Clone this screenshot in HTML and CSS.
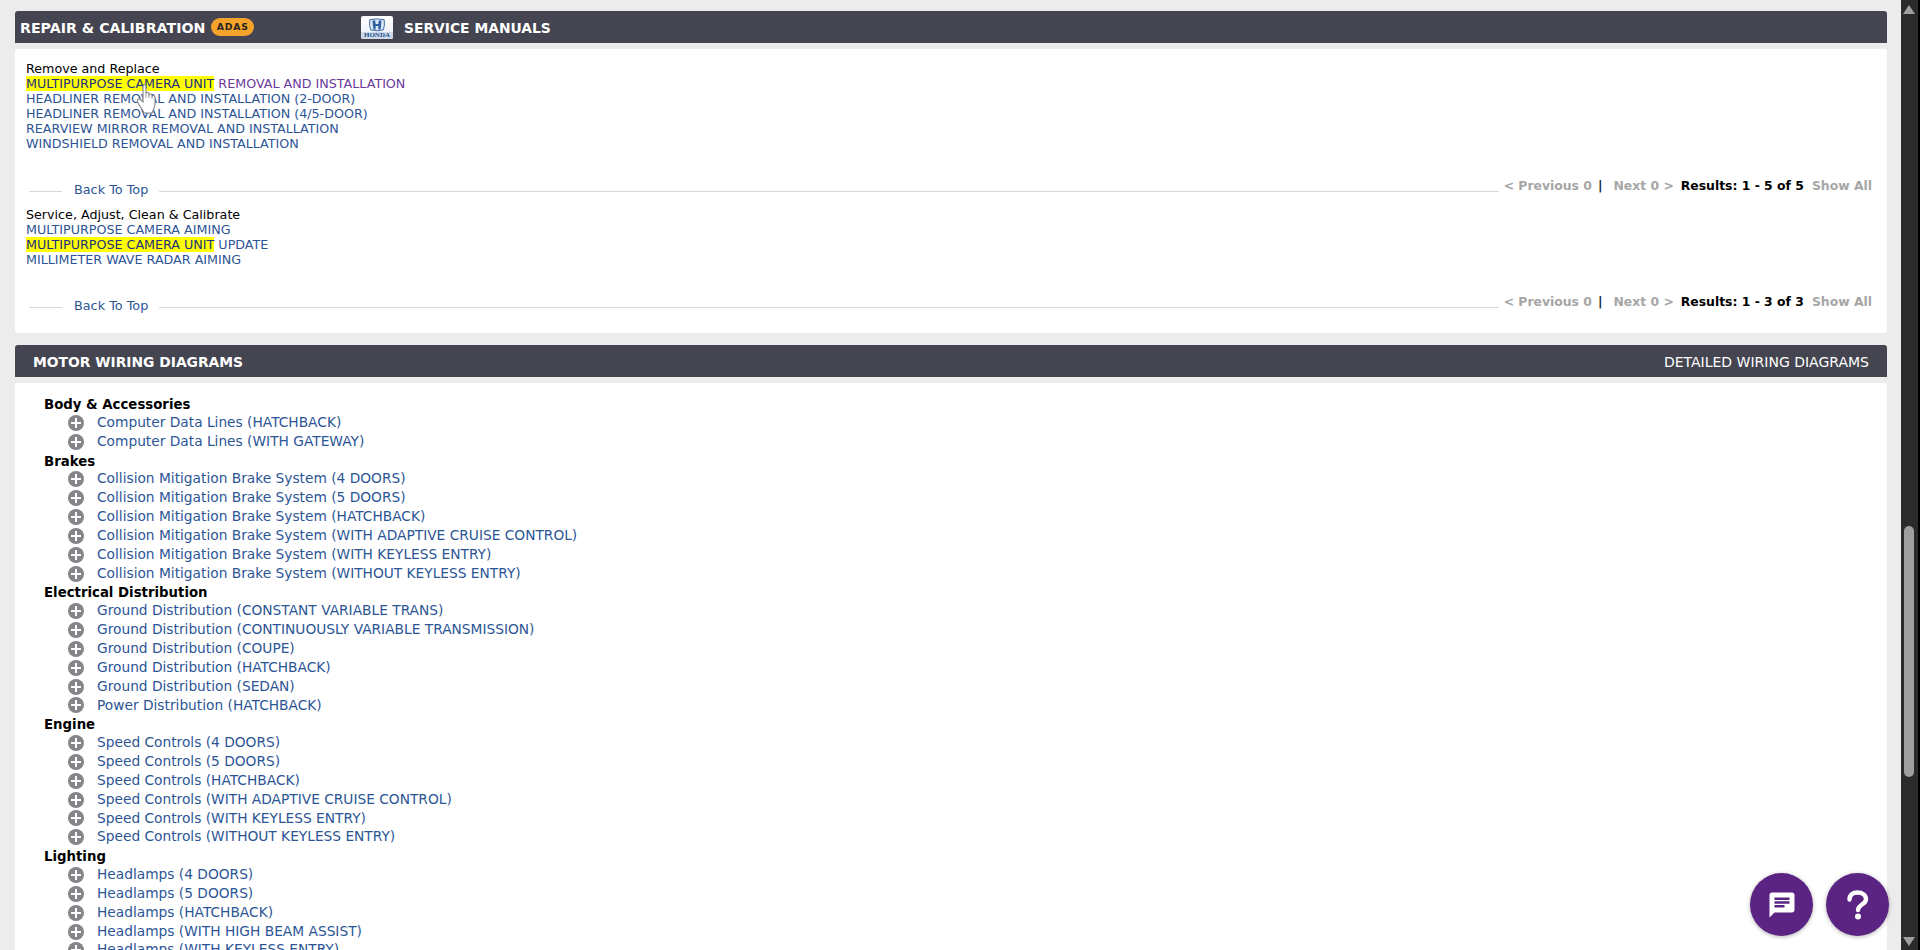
FILE: index.html
```html
<!DOCTYPE html>
<html lang="en">
<head>
<meta charset="utf-8">
<title>Repair &amp; Calibration</title>
<link rel="stylesheet" href="styles.css">
</head>
<body>
<main class="page">
  <header class="bar bar-first">
    <div class="bar-left"><span class="bar-title bar-title-main">REPAIR &amp; CALIBRATION</span><span class="badge">ADAS</span></div>
    <div class="honda">
      <svg class="honda-h" viewBox="0 0 20 15" aria-hidden="true"><path d="M2 1.500Q10 0 18 1.500Q19 8 17 13Q10 15 3 13Q1 8 2 1.500Z" fill="#dbe6f3" stroke="#2f5f9e" stroke-width="1"/><path d="M5 2.500H8L8.500 6.500H11.500L12 2.500H15L14 12.500H11.500L11.500 8.500H8.500L8.500 12.500H6Z" fill="#2f5f9e"/></svg>
      <span class="honda-word">HONDA</span>
    </div>
    <span class="bar-title">SERVICE MANUALS</span>
  </header>
  <section class="card card-repair">
    <div class="group">
      <div class="group-name">Remove and Replace</div>
      <a class="doc visited"><mark>MULTIPURPOSE CAMERA UNIT</mark> REMOVAL AND INSTALLATION</a>
      <a class="doc">HEADLINER REMOVAL AND INSTALLATION (2-DOOR)</a>
      <a class="doc">HEADLINER REMOVAL AND INSTALLATION (4/5-DOOR)</a>
      <a class="doc">REARVIEW MIRROR REMOVAL AND INSTALLATION</a>
      <a class="doc">WINDSHIELD REMOVAL AND INSTALLATION</a>
    </div>
    <div class="pager pager-first">
      <span class="rule rule-short"></span><a class="top">Back To Top</a><span class="rule rule-long"></span>
      <div class="pager-nav"><span class="off">&lt; Previous 0</span><span class="sep">|</span><span class="off">Next 0 &gt;</span><span class="count">Results: 1 - 5 of 5</span><span class="off">Show All</span></div>
    </div>
    <div class="group group-second">
      <div class="group-name">Service, Adjust, Clean &amp; Calibrate</div>
      <a class="doc">MULTIPURPOSE CAMERA AIMING</a>
      <a class="doc"><mark>MULTIPURPOSE CAMERA UNIT</mark> UPDATE</a>
      <a class="doc">MILLIMETER WAVE RADAR AIMING</a>
    </div>
    <div class="pager pager-second">
      <span class="rule rule-short"></span><a class="top">Back To Top</a><span class="rule rule-long"></span>
      <div class="pager-nav"><span class="off">&lt; Previous 0</span><span class="sep">|</span><span class="off">Next 0 &gt;</span><span class="count">Results: 1 - 3 of 3</span><span class="off">Show All</span></div>
    </div>
    <svg class="hand" viewBox="0 0 24 32" aria-hidden="true"><path d="M8 14V3.500C8 1 11 1 11 3.500V11C11 9 14 9 14 11V12.500C14 10.500 17 10.500 17 12.500V14C17 12 20 12 20 14.500V21C20 25 18 27 17 30H9C8 27 5 24 2.500 19C1.500 16.500 4 15 5.500 16.500L8 19Z" fill="#fff" stroke="#85858c" stroke-width="1.100"/><path d="M11 11V15M14 12V15M17 14V16" fill="none" stroke="#85858c" stroke-width=".8"/></svg>
  </section>

  <header class="bar bar-second">
    <span class="bar-title">MOTOR WIRING DIAGRAMS</span>
    <span class="bar-link">DETAILED WIRING DIAGRAMS</span>
  </header>
  <section class="card card-wiring">
    <div class="sys">Body &amp; Accessories</div>
    <a class="row"><i class="plus"></i>Computer Data Lines (HATCHBACK)</a>
    <a class="row"><i class="plus"></i>Computer Data Lines (WITH GATEWAY)</a>
    <div class="sys">Brakes</div>
    <a class="row"><i class="plus"></i>Collision Mitigation Brake System (4 DOORS)</a>
    <a class="row"><i class="plus"></i>Collision Mitigation Brake System (5 DOORS)</a>
    <a class="row"><i class="plus"></i>Collision Mitigation Brake System (HATCHBACK)</a>
    <a class="row"><i class="plus"></i>Collision Mitigation Brake System (WITH ADAPTIVE CRUISE CONTROL)</a>
    <a class="row"><i class="plus"></i>Collision Mitigation Brake System (WITH KEYLESS ENTRY)</a>
    <a class="row"><i class="plus"></i>Collision Mitigation Brake System (WITHOUT KEYLESS ENTRY)</a>
    <div class="sys">Electrical Distribution</div>
    <a class="row"><i class="plus"></i>Ground Distribution (CONSTANT VARIABLE TRANS)</a>
    <a class="row"><i class="plus"></i>Ground Distribution (CONTINUOUSLY VARIABLE TRANSMISSION)</a>
    <a class="row"><i class="plus"></i>Ground Distribution (COUPE)</a>
    <a class="row"><i class="plus"></i>Ground Distribution (HATCHBACK)</a>
    <a class="row"><i class="plus"></i>Ground Distribution (SEDAN)</a>
    <a class="row"><i class="plus"></i>Power Distribution (HATCHBACK)</a>
    <div class="sys">Engine</div>
    <a class="row"><i class="plus"></i>Speed Controls (4 DOORS)</a>
    <a class="row"><i class="plus"></i>Speed Controls (5 DOORS)</a>
    <a class="row"><i class="plus"></i>Speed Controls (HATCHBACK)</a>
    <a class="row"><i class="plus"></i>Speed Controls (WITH ADAPTIVE CRUISE CONTROL)</a>
    <a class="row"><i class="plus"></i>Speed Controls (WITH KEYLESS ENTRY)</a>
    <a class="row"><i class="plus"></i>Speed Controls (WITHOUT KEYLESS ENTRY)</a>
    <div class="sys">Lighting</div>
    <a class="row"><i class="plus"></i>Headlamps (4 DOORS)</a>
    <a class="row"><i class="plus"></i>Headlamps (5 DOORS)</a>
    <a class="row"><i class="plus"></i>Headlamps (HATCHBACK)</a>
    <a class="row"><i class="plus"></i>Headlamps (WITH HIGH BEAM ASSIST)</a>
    <a class="row"><i class="plus"></i>Headlamps (WITH KEYLESS ENTRY)</a>
  </section>
</main>
<aside class="scrollbar" aria-hidden="true">
  <span class="arrow arrow-up"></span>
  <span class="thumb"></span>
  <span class="arrow arrow-down"></span>
</aside>
<div class="fabs">
  <button class="fab" aria-label="Chat"><svg viewBox="0 0 24 24" width="30" height="30"><path fill="#fff" d="M20 2H4C2.900 2 2 2.900 2 4V22L6 18H20C21.100 18 22 17.100 22 16V4C22 2.900 21.100 2 20 2ZM6 9H18V11H6ZM14 14H6V12H14ZM18 8H6V6H18Z"/></svg></button>
  <button class="fab" aria-label="Help"><svg viewBox="0 0 24 30" width="24" height="32"><path fill="none" stroke="#fff" stroke-width="4.400" stroke-linecap="round" d="M3.500 9.500C3.500 5 7 2.500 11.500 2.500C16.500 2.500 20 5.300 20 9.200C20 14.500 12 14.500 12 20"/><circle cx="12" cy="26.500" r="3" fill="#fff"/></svg></button>
</div>
</body>
</html>
```

FILE: styles.css
```css
html, body {
  margin: 0;
  height: 950px;
  overflow: hidden;
}
body {
  display: flex;
  background: #ececec;
  font-family: "DejaVu Sans", Verdana, sans-serif;
  color: #000;
}
.page {
  flex: 1;
  min-width: 0;
  padding: 11px 14px 0 15px;
  overflow: hidden;
}
.bar {
  display: flex;
  align-items: center;
  height: 32px;
  background: #444550;
  border-radius: 3px 3px 0 0;
  color: #fff;
}
.bar-first { padding-left: 5px; }
.bar-second {
  justify-content: space-between;
  margin-top: 12px;
  padding: 0 18px;
}
.bar-left {
  display: flex;
  align-items: center;
  width: 341px;
}
.bar-title {
  margin-top: 2px;
  font-size: 13.850px;
  font-weight: 700;
  white-space: nowrap;
}
.bar-title-main { font-size: 14.200px; }
.bar-link {
  margin-top: 2px;
  font-size: 14px;
}
.badge {
  margin-left: 6px;
  width: 43px;
  height: 18px;
  border-radius: 9px;
  background: #f5a32b;
  color: #2b2420;
  font-size: 9.300px;
  font-weight: 700;
  letter-spacing: .8px;
  line-height: 18px;
  text-align: center;
}
.honda {
  display: flex;
  flex-direction: column;
  align-items: center;
  width: 32px;
  height: 23px;
  margin-right: 11px;
  border-radius: 2px;
  background: linear-gradient(#fff, #e8eef6);
  overflow: hidden;
}
.honda-h {
  width: 18px;
  height: 14px;
  margin-top: 2px;
}
.honda-word {
  width: 100%;
  background: #cfdbea;
  color: #23518f;
  font-family: "Liberation Serif", serif;
  font-size: 7px;
  font-weight: 700;
  line-height: 7px;
  text-align: center;
}
.card {
  position: relative;
  background: #fff;
  border-radius: 2px;
}
.card-repair {
  margin-top: 6px;
  height: 284px;
  padding: 12px 11px 0;
  box-sizing: border-box;
}
.card-wiring {
  margin-top: 6px;
  padding: 13px 0 0 29px;
}
.group-name, .doc {
  display: block;
  font-size: 12.700px;
  line-height: 15px;
  white-space: nowrap;
}
.doc { color: #2c5596; }
.visited { color: #6b3a9c; }
mark {
  background: #ffff00;
  color: #1c2f80;
}
.pager {
  display: flex;
  align-items: center;
  height: 15px;
  padding-left: 3px;
}
.pager-first { margin-top: 31px; }
.pager-second { margin-top: 31px; }
.group-second { margin-top: 10px; }
.rule {
  height: 1px;
  margin-top: 3px;
  background: #d8d8d8;
}
.rule-short { width: 33px; }
.rule-long { flex: 1; }
.top {
  margin: 0 11px 0 12px;
  font-size: 12.800px;
  color: #2c5596;
}
.pager-nav {
  display: flex;
  align-items: center;
  margin: -9px 4px 0 5px;
  font-size: 12.400px;
  font-weight: 700;
  white-space: nowrap;
}
.off { color: #a6a6a6; }
.sep {
  margin: 0 11px 0 6px;
  color: #111d33;
}
.count { margin: 0 8px 0 7px; }
.hand {
  position: absolute;
  left: 120px;
  top: 34px;
  width: 24px;
  height: 32px;
}
.sys, .row {
  box-sizing: border-box;
  height: 18.850px;
  line-height: 18.850px;
  white-space: nowrap;
}
.sys {
  font-size: 13.300px;
  font-weight: 700;
}
.row {
  display: flex;
  align-items: center;
  padding: 0 0 4px 24px;
  font-size: 13.750px;
  color: #2c5596;
}
.plus {
  position: relative;
  flex: none;
  width: 16px;
  height: 16px;
  margin: 1px 13px 0 0;
  border-radius: 50%;
  background: #85858a;
}
.plus::before, .plus::after {
  content: "";
  position: absolute;
  background: #fff;
}
.plus::before { left: 3px; top: 7px; width: 10px; height: 2px; }
.plus::after { left: 7px; top: 3px; width: 2px; height: 10px; }
.scrollbar {
  flex: none;
  display: flex;
  flex-direction: column;
  align-items: center;
  box-sizing: border-box;
  width: 19px;
  height: 950px;
  padding: 5px 2px 4px 0;
  border-right: 2px solid #000;
  background: #2b2b2b;
}
.arrow {
  width: 0;
  height: 0;
  border-left: 6px solid transparent;
  border-right: 6px solid transparent;
}
.arrow-up { border-bottom: 9px solid #a0a0a0; }
.arrow-down { margin-top: auto; border-top: 9px solid #a0a0a0; }
.thumb {
  width: 10px;
  height: 251px;
  margin-top: 512px;
  border-radius: 5px;
  background: #9f9f9f;
}
.fabs {
  position: fixed;
  left: 1750px;
  top: 873px;
  display: flex;
  gap: 13px;
}
.fab {
  display: flex;
  align-items: center;
  justify-content: center;
  width: 63px;
  height: 63px;
  padding: 0;
  border: 0;
  border-radius: 50%;
  background: #5b2382;
  box-shadow: 0 1px 4px rgba(0,0,0,.3);
}
```
